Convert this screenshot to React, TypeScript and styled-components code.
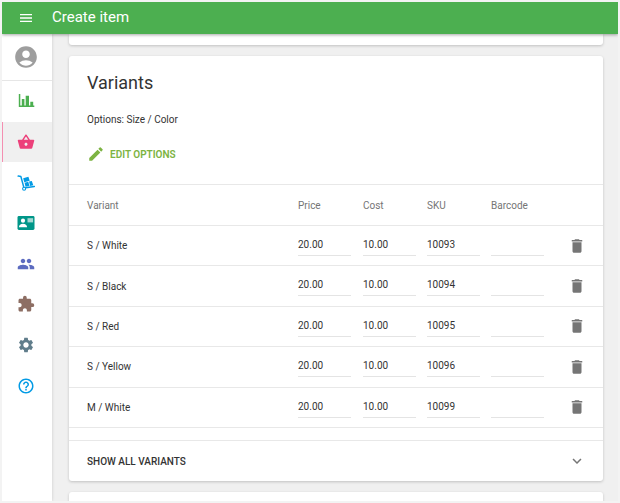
import React from 'react';
import styled, { createGlobalStyle } from 'styled-components';
import {
  MdMenu,
  MdAccountCircle,
  MdShoppingBasket,
  MdPeople,
  MdExtension,
  MdSettings,
  MdHelpOutline,
  MdEdit,
  MdDelete,
  MdExpandMore,
} from 'react-icons/md';

const GlobalStyle = createGlobalStyle`
  *, *::before, *::after { box-sizing: border-box; }
  body {
    margin: 0;
    background: #f0f0f0;
    color: #333;
    font-family: Roboto, "Liberation Sans", sans-serif;
    font-size: 10px;
  }
  button, input { font: inherit; color: inherit; }
`;

const Shell = styled.div`
  display: flex;
  flex-direction: column;
  height: 100vh;
  border: 2px solid #f3f3f3;
  overflow: hidden;
`;

const TopBar = styled.header`
  position: relative;
  z-index: 2;
  display: flex;
  flex: none;
  align-items: center;
  gap: 18px;
  height: 32px;
  padding: 0 16px;
  background: #4caf50;
  color: #fff;
  box-shadow: 0 1px 3px rgba(0, 0, 0, 0.35);
`;

const IconButton = styled.button`
  display: flex;
  align-items: center;
  justify-content: center;
  padding: 0;
  border: 0;
  background: none;
  cursor: pointer;
`;

const PageTitle = styled.h1`
  margin: 0;
  padding-bottom: 2px;
  font-size: 15px;
  font-weight: 400;
  line-height: 20px;
`;

const Body = styled.div`
  display: flex;
  flex: 1;
  min-height: 0;
`;

const SideBar = styled.aside`
  flex: none;
  width: 50px;
  background: #fff;
  box-shadow: 0 0 3px rgba(0, 0, 0, 0.16);
`;

const Profile = styled.a`
  display: flex;
  align-items: center;
  justify-content: center;
  height: 47px;
  padding-right: 2px;
  border-bottom: 1px solid #e6e6e6;
  color: #9e9e9e;
`;

const Nav = styled.nav`
  display: grid;
  grid-template-rows: repeat(8, 1fr);
  height: 325px;
`;

const NavLink = styled.a<{ $color: string; $active?: boolean }>`
  display: flex;
  align-items: center;
  justify-content: center;
  padding-right: 3px;
  border-left: 1px solid ${(p) => (p.$active ? '#f48fb1' : 'transparent')};
  background: ${(p) => (p.$active ? '#f0f0f0' : 'transparent')};
  color: ${(p) => p.$color};
`;

const Main = styled.main`
  display: flex;
  flex: 1;
  flex-direction: column;
  gap: 11px;
  min-width: 0;
  padding: 0 15px 0 17px;
  overflow: hidden;
`;

const Card = styled.section`
  flex: none;
  border-radius: 3px;
  background: #fff;
  box-shadow: 0 1px 3px rgba(0, 0, 0, 0.2);
`;

const CardEnd = styled(Card)`
  height: 11px;
  border-radius: 0 0 3px 3px;
`;

const CardStart = styled(Card)`
  flex: 1 0 0;
  border-radius: 3px 3px 0 0;
`;

const CardHead = styled.div`
  padding: 17px 18px 18px;
`;

const CardTitle = styled.h2`
  margin: 0 0 19px;
  font-size: 18px;
  font-weight: 400;
  line-height: 20px;
`;

const OptionsText = styled.p`
  margin: 0 0 14px;
  line-height: 16px;
`;

const EditButton = styled(IconButton)`
  gap: 5px;
  height: 24px;
  color: #7cb342;
  font-weight: 600;
`;

const Table = styled.table`
  width: 100%;
  height: 244px;
  table-layout: fixed;
  border-collapse: collapse;
`;

const Row = styled.tr`
  height: 40px;
  border-top: 1px solid #e8e8e8;
  border-bottom: 1px solid #e8e8e8;
`;

const HeadCell = styled.th<{ $width?: number; $first?: boolean }>`
  width: ${(p) => (p.$width ? `${p.$width}px` : 'auto')};
  padding: 0 0 0 ${(p) => (p.$first ? 18 : 0)}px;
  color: #757575;
  font-weight: 400;
  text-align: left;
`;

const HeadRow = styled(Row)`
  height: 41px;
`;

const NameCell = styled.th`
  padding: 0 0 0 18px;
  font-weight: 400;
  text-align: left;
`;

const FieldCell = styled.td`
  padding: 8px 0 0;
  vertical-align: top;
`;

const Field = styled.input`
  display: block;
  width: 53px;
  height: 22px;
  padding: 0;
  border: 0;
  border-bottom: 1px solid #e4e4e4;
  border-radius: 0;
  outline: 0;
  background: transparent;
`;

const ActionCell = styled.td`
  padding: 0 0 0 10px;
`;

const DeleteButton = styled(IconButton)`
  width: 24px;
  height: 24px;
  color: #757575;
`;

const ShowAllButton = styled(IconButton)`
  justify-content: space-between;
  width: 100%;
  height: 41px;
  margin-top: 12px;
  padding: 0 17px 0 18px;
  border-top: 1px solid #e8e8e8;
  font-weight: 500;
`;

const ChartIcon = () => (
  <svg width="18" height="18" viewBox="0 0 18 18" fill="currentColor" aria-hidden="true">
    <path d="M1.8 2h1.5v11.6h14V15H1.8z" />
    <path d="M4.8 7h2.6v7H4.8zM8.7 3.8H12V14H8.7zM13.3 9.8h2.9V14h-2.9z" />
  </svg>
);

const TrolleyIcon = () => (
  <svg width="18" height="18" viewBox="0 0 18 18" fill="currentColor" aria-hidden="true">
    <path
      d="M1.2 2.1l2.7.5L7 14l10.3-1.6"
      fill="none"
      stroke="currentColor"
      strokeWidth="1.5"
      strokeLinejoin="round"
      strokeLinecap="round"
    />
    <circle cx="7.1" cy="14.8" r="1.5" fill="#fff" stroke="currentColor" strokeWidth="1.1" />
    <path d="M6.2 4.2l5.2-1.5 1.3 4-5.5 1.5zM7.6 8.8l3.7-1 1.2 4.2-4 .7zM12 7.6l2.8-.7 1.5 4.4-3.1.6z" />
  </svg>
);

const ContactCardIcon = () => (
  <svg width="18" height="18" viewBox="0 0 18 18" aria-hidden="true">
    <rect x="0.5" y="2" width="17" height="14" rx="1.4" fill="currentColor" />
    <circle cx="6" cy="6.7" r="2.1" fill="#fff" />
    <path d="M1.9 13.2c0-2.3 1.8-3.5 4.1-3.5s4.1 1.2 4.1 3.5z" fill="#fff" />
    <path d="M10.5 4.2h5.6v4.2h-5.6z" fill="#a5d8d3" />
  </svg>
);

const navItems = [
  { label: 'Reports', color: '#4caf50', icon: <ChartIcon /> },
  { label: 'Items', color: '#ec407a', icon: <MdShoppingBasket size={18} />, active: true },
  { label: 'Inventory', color: '#039be5', icon: <TrolleyIcon /> },
  { label: 'Employees', color: '#009688', icon: <ContactCardIcon /> },
  { label: 'Customers', color: '#5c6bc0', icon: <MdPeople size={18} /> },
  { label: 'Integrations', color: '#8d6e63', icon: <MdExtension size={18} /> },
  { label: 'Settings', color: '#607d8b', icon: <MdSettings size={18} /> },
  { label: 'Help', color: '#039be5', icon: <MdHelpOutline size={18} /> },
];

const variants = [
  { name: 'S / White', price: '20.00', cost: '10.00', sku: '10093' },
  { name: 'S / Black', price: '20.00', cost: '10.00', sku: '10094' },
  { name: 'S / Red', price: '20.00', cost: '10.00', sku: '10095' },
  { name: 'S / Yellow', price: '20.00', cost: '10.00', sku: '10096' },
  { name: 'M / White', price: '20.00', cost: '10.00', sku: '10099' },
];

export default function App() {
  return (
    <>
      <GlobalStyle />
      <Shell>
        <TopBar>
          <IconButton type="button" aria-label="Menu">
            <MdMenu size={16} />
          </IconButton>
          <PageTitle>Create item</PageTitle>
        </TopBar>
        <Body>
          <SideBar>
            <Profile href="#account" aria-label="Account">
              <MdAccountCircle size={26} />
            </Profile>
            <Nav>
              {navItems.map((item) => (
                <NavLink
                  key={item.label}
                  href={`#${item.label.toLowerCase()}`}
                  aria-label={item.label}
                  $color={item.color}
                  $active={item.active}
                >
                  {item.icon}
                </NavLink>
              ))}
            </Nav>
          </SideBar>
          <Main>
            <CardEnd />
            <Card>
              <CardHead>
                <CardTitle>Variants</CardTitle>
                <OptionsText>Options: Size / Color</OptionsText>
                <EditButton type="button">
                  <MdEdit size={18} />
                  EDIT OPTIONS
                </EditButton>
              </CardHead>
              <Table>
                <thead>
                  <HeadRow>
                    <HeadCell scope="col" $first>Variant</HeadCell>
                    <HeadCell scope="col" $width={65}>Price</HeadCell>
                    <HeadCell scope="col" $width={64}>Cost</HeadCell>
                    <HeadCell scope="col" $width={64}>SKU</HeadCell>
                    <HeadCell scope="col" $width={64}>Barcode</HeadCell>
                    <HeadCell scope="col" $width={48} aria-label="Actions" />
                  </HeadRow>
                </thead>
                <tbody>
                  {variants.map((v) => (
                    <Row key={v.sku}>
                      <NameCell scope="row">{v.name}</NameCell>
                      <FieldCell><Field aria-label={`Price, ${v.name}`} defaultValue={v.price} /></FieldCell>
                      <FieldCell><Field aria-label={`Cost, ${v.name}`} defaultValue={v.cost} /></FieldCell>
                      <FieldCell><Field aria-label={`SKU, ${v.name}`} defaultValue={v.sku} /></FieldCell>
                      <FieldCell><Field aria-label={`Barcode, ${v.name}`} defaultValue="" /></FieldCell>
                      <ActionCell>
                        <DeleteButton type="button" aria-label={`Delete ${v.name}`}>
                          <MdDelete size={18} />
                        </DeleteButton>
                      </ActionCell>
                    </Row>
                  ))}
                </tbody>
              </Table>
              <ShowAllButton type="button">
                SHOW ALL VARIANTS
                <MdExpandMore size={18} color="#757575" />
              </ShowAllButton>
            </Card>
            <CardStart />
          </Main>
        </Body>
      </Shell>
    </>
  );
}
